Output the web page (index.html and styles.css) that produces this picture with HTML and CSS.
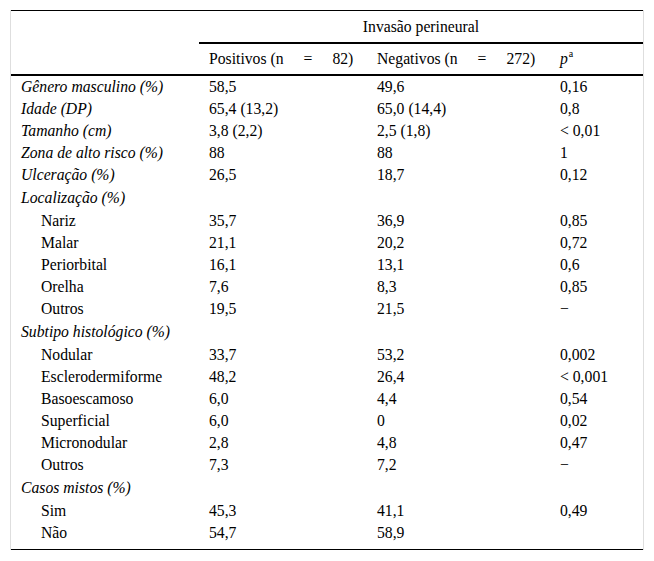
FILE: index.html
```html
<!DOCTYPE html>
<html lang="pt">
<head>
<meta charset="utf-8">
<title>Invasão perineural</title>
<link rel="stylesheet" href="styles.css">
</head>
<body>
<div class="frame">
  <table class="data">
    <colgroup>
      <col class="c1"><col class="c2"><col class="c3"><col class="c4">
    </colgroup>
    <thead>
      <tr>
        <th class="corner" rowspan="2"></th>
        <th class="group" colspan="3">Invasão perineural</th>
      </tr>
      <tr class="sub">
        <th>Positivos (n<span class="eq">=</span>82)</th>
        <th>Negativos (n<span class="eq">=</span>272)</th>
        <th><i>p</i><sup>a</sup></th>
      </tr>
    </thead>
    <tbody>
      <tr><td class="lab">Gênero masculino (%)</td><td>58,5</td><td>49,6</td><td>0,16</td></tr>
      <tr><td class="lab">Idade (DP)</td><td>65,4 (13,2)</td><td>65,0 (14,4)</td><td>0,8</td></tr>
      <tr><td class="lab">Tamanho (cm)</td><td>3,8 (2,2)</td><td>2,5 (1,8)</td><td>&lt; 0,01</td></tr>
      <tr><td class="lab">Zona de alto risco (%)</td><td>88</td><td>88</td><td>1</td></tr>
      <tr><td class="lab">Ulceração (%)</td><td>26,5</td><td>18,7</td><td>0,12</td></tr>
      <tr class="grp"><td class="lab">Localização (%)</td><td></td><td></td><td></td></tr>
      <tr><td class="ind">Nariz</td><td>35,7</td><td>36,9</td><td>0,85</td></tr>
      <tr><td class="ind">Malar</td><td>21,1</td><td>20,2</td><td>0,72</td></tr>
      <tr><td class="ind">Periorbital</td><td>16,1</td><td>13,1</td><td>0,6</td></tr>
      <tr><td class="ind">Orelha</td><td>7,6</td><td>8,3</td><td>0,85</td></tr>
      <tr><td class="ind">Outros</td><td>19,5</td><td>21,5</td><td>−</td></tr>
      <tr class="grp"><td class="lab">Subtipo histológico (%)</td><td></td><td></td><td></td></tr>
      <tr><td class="ind">Nodular</td><td>33,7</td><td>53,2</td><td>0,002</td></tr>
      <tr><td class="ind">Esclerodermiforme</td><td>48,2</td><td>26,4</td><td>&lt; 0,001</td></tr>
      <tr><td class="ind">Basoescamoso</td><td>6,0</td><td>4,4</td><td>0,54</td></tr>
      <tr><td class="ind">Superficial</td><td>6,0</td><td>0</td><td>0,02</td></tr>
      <tr><td class="ind">Micronodular</td><td>2,8</td><td>4,8</td><td>0,47</td></tr>
      <tr><td class="ind">Outros</td><td>7,3</td><td>7,2</td><td>−</td></tr>
      <tr class="grp"><td class="lab">Casos mistos (%)</td><td></td><td></td><td></td></tr>
      <tr><td class="ind">Sim</td><td>45,3</td><td>41,1</td><td>0,49</td></tr>
      <tr class="last"><td class="ind">Não</td><td>54,7</td><td>58,9</td><td></td></tr>
    </tbody>
  </table>
</div>
</body>
</html>
```

FILE: styles.css
```css
html, body {
  margin: 0;
  padding: 0;
  background: #ffffff;
}

body {
  font-family: "Liberation Serif", Tinos, "Times New Roman", Times, serif;
  font-size: 15.7px;
  color: #000000;
}

.frame {
  margin: 10px 10px 0 10px;
  border-left: 1px solid #dedede;
  border-right: 1px solid #dedede;
}

.data {
  width: 100%;
  table-layout: fixed;
  border-collapse: separate;
  border-spacing: 0;
  border-top: 1px solid #000;
  border-bottom: 1px solid #000;
  font-family: inherit;
  font-size: inherit;
}

.c1 { width: 188px; }
.c2 { width: 168px; }
.c3 { width: 183px; }
.c4 { width: auto; }

th, td {
  padding: 0 0 0 10px;
  text-align: left;
  font-weight: normal;
  white-space: nowrap;
  vertical-align: middle;
  font-family: inherit;
}

th.corner {
  border-bottom: 2px solid #000;
  padding: 0;
}

th.group {
  height: 31px;
  text-align: center;
  padding: 0;
  border-bottom: 2px solid #000;
}

tr.sub th {
  height: 30px;
  border-bottom: 2px solid #000;
}

.eq {
  margin: 0 20px;
}

sup {
  font-size: 10px;
  line-height: 0;
  vertical-align: 7px;
  margin-left: 1px;
}

tbody td {
  height: 22px;
  line-height: 22px;
}

tbody tr.grp td {
  height: 24px;
  line-height: 24px;
}

tbody tr.last td {
  height: 22px;
  padding-bottom: 5px;
}

td.lab {
  font-style: italic;
}

td.ind {
  padding-left: 30px;
}
```
